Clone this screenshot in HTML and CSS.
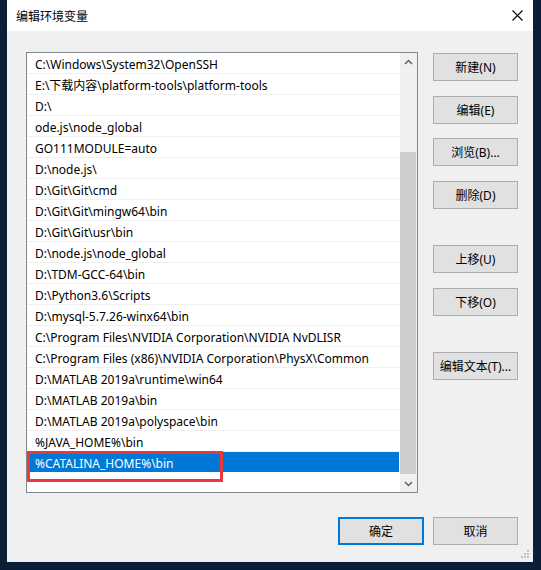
FILE: index.html
```html
<!DOCTYPE html>
<html lang="zh">
<head>
<meta charset="utf-8">
<title>编辑环境变量</title>
<link rel="stylesheet" href="styles.css">
</head>
<body>
<div class="window">
  <div class="titlebar">
    <span class="title">编辑环境变量</span>
    <svg class="close" width="11" height="11" viewBox="0 0 11 11"><path d="M0.5 0.5 L10.5 10.5 M10.5 0.5 L0.5 10.5" stroke="#000" stroke-width="1.1" fill="none"/></svg>
  </div>
  <div class="content">
    <div class="main">
      <div class="listbox">
        <div class="rows">
          <div class="row">C:\Windows\System32\OpenSSH</div>
          <div class="row">E:\下载内容\platform-tools\platform-tools</div>
          <div class="row">D:\</div>
          <div class="row">ode.js\node_global</div>
          <div class="row">GO111MODULE=auto</div>
          <div class="row">D:\node.js\</div>
          <div class="row">D:\Git\Git\cmd</div>
          <div class="row">D:\Git\Git\mingw64\bin</div>
          <div class="row">D:\Git\Git\usr\bin</div>
          <div class="row">D:\node.js\node_global</div>
          <div class="row">D:\TDM-GCC-64\bin</div>
          <div class="row">D:\Python3.6\Scripts</div>
          <div class="row">D:\mysql-5.7.26-winx64\bin</div>
          <div class="row">C:\Program Files\NVIDIA Corporation\NVIDIA NvDLISR</div>
          <div class="row">C:\Program Files (x86)\NVIDIA Corporation\PhysX\Common</div>
          <div class="row">D:\MATLAB 2019a\runtime\win64</div>
          <div class="row">D:\MATLAB 2019a\bin</div>
          <div class="row">D:\MATLAB 2019a\polyspace\bin</div>
          <div class="row">%JAVA_HOME%\bin</div>
          <div class="row selected"><span class="sel">%CATALINA_HOME%\bin</span></div>
        </div>
        <div class="scrollbar">
          <div class="arrow up"><svg width="9" height="6" viewBox="0 0 9 6"><path d="M1 5 L4.5 1.5 L8 5" stroke="#606060" stroke-width="1.5" fill="none"/></svg></div>
          <div class="track"><div class="thumb"></div></div>
          <div class="arrow down"><svg width="9" height="6" viewBox="0 0 9 6"><path d="M1 1 L4.5 4.5 L8 1" stroke="#606060" stroke-width="1.5" fill="none"/></svg></div>
        </div>
        <div class="annotation"></div>
      </div>
      <div class="side">
        <button class="btn">新建(N)</button>
        <button class="btn">编辑(E)</button>
        <button class="btn">浏览(B)...</button>
        <button class="btn">删除(D)</button>
        <button class="btn gap">上移(U)</button>
        <button class="btn">下移(O)</button>
        <button class="btn gap">编辑文本(T)...</button>
      </div>
    </div>
    <div class="footer">
      <button class="btn default">确定</button>
      <button class="btn">取消</button>
    </div>
    <svg class="grip" width="10" height="10" viewBox="0 0 10 10" fill="#c2c2c2">
      <rect x="7" y="0" width="2" height="2"/>
      <rect x="4" y="3" width="2" height="2"/><rect x="7" y="3" width="2" height="2"/>
      <rect x="1" y="6" width="2" height="2"/><rect x="4" y="6" width="2" height="2"/><rect x="7" y="6" width="2" height="2"/>
    </svg>
  </div>
</div>
</body>
</html>
```
FILE: styles.css
```css
* { box-sizing: border-box; }
html, body { margin: 0; padding: 0; }
body {
  background: #0c1d38;
  width: 541px;
  height: 570px;
  overflow: hidden;
  font-family: "Noto Sans", "Noto Sans CJK SC", sans-serif;
  font-size: 12px;
  color: #000;
}
.window {
  margin-left: 7px;
  width: 526px;
  height: 562px;
  background: #f0f0f0;
  display: flex;
  flex-direction: column;
}
.titlebar {
  height: 31px;
  background: #fff;
  display: flex;
  align-items: center;
  justify-content: space-between;
  padding: 0 10px 0 9px;
}
.title {
  font-family: "Noto Sans CJK SC", sans-serif;
  font-size: 12px;
  line-height: 14px;
}
.close { display: block; }
.content {
  flex: 1;
  position: relative;
  padding: 21px 15px 0 19px;
  display: flex;
  flex-direction: column;
}
.main {
  display: flex;
  gap: 15px;
}
.listbox {
  position: relative;
  width: 392px;
  height: 441px;
  border: 1px solid #828790;
  background: #fff;
  display: flex;
}
.rows {
  flex: 1;
  display: flex;
  flex-direction: column;
}
.row {
  height: 21px;
  line-height: 24px;
  border-bottom: 1px solid #f0f0f0;
  padding-left: 8px;
  white-space: nowrap;
  overflow: hidden;
}
.row.selected {
  padding-left: 1px;
  border-bottom-color: #fff;
}
.sel {
  display: block;
  background: #0078d7;
  color: #fff;
  padding-left: 7px;
  height: 20px;
  line-height: 24px;
  overflow: hidden;
  margin-right: 1px;
}
.scrollbar {
  width: 17px;
  background: #f0f0f0;
  display: flex;
  flex-direction: column;
}
.arrow {
  height: 17px;
  display: flex;
  align-items: center;
  justify-content: center;
}
.track {
  flex: 1;
  display: flex;
  flex-direction: column;
  justify-content: flex-end;
}
.thumb {
  height: 322px;
  background: #cdcdcd;
  margin: 0 1px 1px 0;
}
.annotation {
  position: absolute;
  left: 0;
  top: 398px;
  width: 196px;
  height: 31px;
  border: 3px solid #e8393c;
}
.side {
  width: 85px;
  display: flex;
  flex-direction: column;
  padding-top: 1px;
  gap: 15px;
}
.btn {
  width: 85px;
  height: 28px;
  background: #e1e1e1;
  border: 1px solid #adadad;
  font-family: "Noto Sans", "Noto Sans CJK SC", sans-serif;
  font-size: 12px;
  color: #000;
  padding: 0;
  margin: 0;
}
.side .btn:nth-child(3) { margin-top: -1px; }
.side .btn.gap { margin-top: 21px; }
.footer {
  display: flex;
  justify-content: flex-end;
  gap: 9px;
  margin-top: 24px;
}
.btn.default {
  width: 86px;
  border: 2px solid #0078d7;
}
.grip {
  position: absolute;
  right: 3px;
  bottom: 2px;
}
```
